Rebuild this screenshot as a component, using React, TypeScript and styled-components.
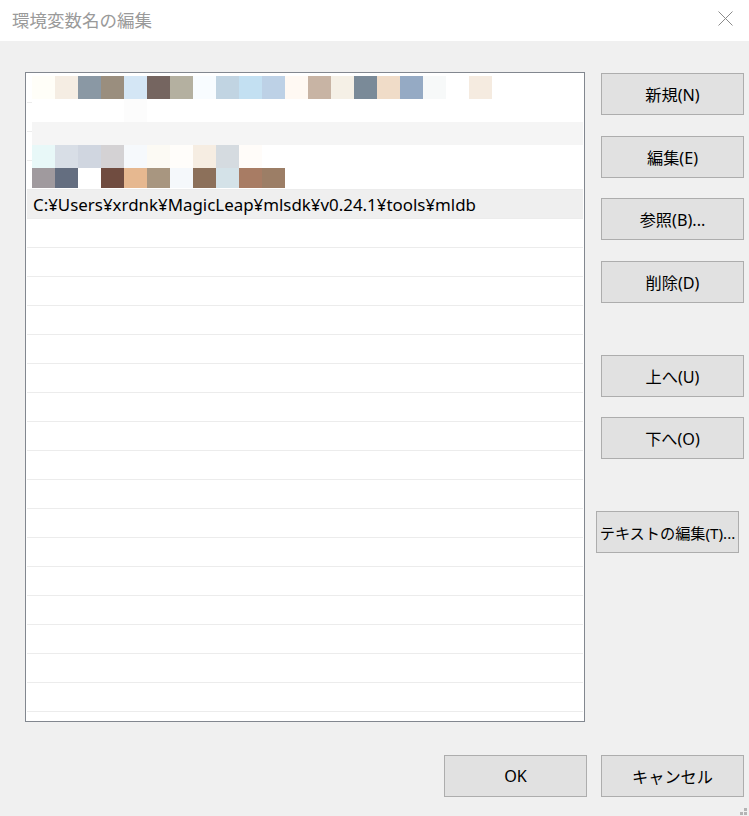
import React from "react"
import styled, {createGlobalStyle} from "styled-components"

const GlobalStyle = createGlobalStyle`
  html, body {
    margin: 0;
    padding: 0;
    background: #f0f0f0;
  }
  body {
    font-family: "Noto Sans", "Noto Sans CJK JP", sans-serif;
  }
`

const Window = styled.div`
  position: relative;
  width: 749px;
  height: 816px;
  background: #f0f0f0;
  display: flex;
  flex-direction: column;
  overflow: hidden;
`

const TitleBar = styled.div`
  height: 41px;
  flex: none;
  background: #ffffff;
  display: flex;
  align-items: center;
  justify-content: space-between;
  padding: 0 16px 0 12px;
`

const Title = styled.span`
  font-family: "Noto Sans CJK JP", sans-serif;
  font-size: 17.5px;
  color: #9a9a9a;
  line-height: 1;
  margin-top: -1px;
`

const CloseButton = styled.button`
  width: 15px;
  height: 15px;
  padding: 0;
  border: 0 none;
  background: transparent;
  display: block;
  margin-top: -4px;
`

const Body = styled.div`
  display: flex;
  padding: 31px 5px 0 25px;
`

const List = styled.div`
  position: relative;
  width: 560px;
  height: 650px;
  box-sizing: border-box;
  border: 1px solid #82878f;
  background: #ffffff;
  padding: 1px 1px 0 1px;
  overflow: hidden;
`

const Row = styled.div<{$selected?: boolean}>`
  height: 28px;
  border-bottom: 1px solid #ececec;
  background: ${p => (p.$selected ? "#efefef" : "#ffffff")};
  display: flex;
  align-items: center;
  padding-left: 6px;
  font-size: 16.9px;
  color: #000000;
  white-space: nowrap;
`

const Mosaic = styled.svg`
  position: absolute;
  left: 6px;
  top: 3px;
  display: block;
`

const ButtonColumn = styled.div`
  display: flex;
  flex-direction: column;
  margin-left: 16px;
  width: 143px;
`

const Button = styled.button<{$top?: number; $shift?: number; $compact?: boolean}>`
  width: 143px;
  height: 42px;
  flex: none;
  box-sizing: border-box;
  margin-top: ${p => p.$top ?? 0}px;
  margin-left: ${p => -(p.$shift ?? 0)}px;
  padding: 0;
  background: #e1e1e1;
  border: 1px solid #adadad;
  border-radius: 0;
  font-family: "Noto Sans", "Noto Sans CJK JP", sans-serif;
  font-size: ${p => (p.$compact ? 15.2 : 16.2)}px;
  color: #000000;
  white-space: nowrap;
  display: flex;
  align-items: center;
  justify-content: center;
`

const Footer = styled.div`
  display: flex;
  justify-content: flex-end;
  gap: 14px;
  padding: 33px 5px 0 0;
`

const Grip = styled.svg`
  position: absolute;
  right: 1px;
  bottom: 0;
  display: block;
`

type Cell = [number, string]

// pixelated entries at the top of the list
const mosaicRows: {y: number; h: number; cells: Cell[]}[] = [
  {
    y: 0, h: 23, cells: [
      [0, "#fffef8"], [23, "#f5ede3"], [46, "#8a98a4"], [69, "#9a8e7e"], [92, "#d4e6f5"],
      [115, "#756560"], [138, "#b4b0a0"], [161, "#f8fcff"], [184, "#c1d4e2"], [207, "#c3e0f2"],
      [230, "#bdd1e6"], [253, "#fff9f3"], [276, "#c8b4a4"], [299, "#f5f0e6"], [322, "#7a8a98"],
      [345, "#f0dcc8"], [368, "#95aac4"], [391, "#f7f9f9"], [437, "#f5ebe0"],
    ],
  },
  {y: 23, h: 23, cells: [[92, "#fcfcfc"]]},
  {
    y: 69, h: 23, cells: [
      [0, "#e8f8f8"], [23, "#d8dee6"], [46, "#d0d6e0"], [69, "#d4d2d4"], [92, "#f6f9fc"],
      [115, "#fcfaf4"], [138, "#fffdfa"], [161, "#f6ede2"], [184, "#d5dbe0"], [207, "#fffcf9"],
    ],
  },
  {
    y: 92, h: 20, cells: [
      [0, "#a09a9e"], [23, "#646e80"], [69, "#704c40"], [92, "#e6b890"], [115, "#a89680"],
      [138, "#f5f8fb"], [161, "#8c705a"], [184, "#d4e2e8"], [207, "#a87c64"], [230, "#9c7e66"],
    ],
  },
]

const ROW_COUNT = 23

export default function App() {
  let rows = []
  for (let i = 0; i < ROW_COUNT; i++) {
    if (i === 4) {
      rows.push(<Row key={i} $selected>C:¥Users¥xrdnk¥MagicLeap¥mlsdk¥v0.24.1¥tools¥mldb</Row>)
    } else {
      rows.push(<Row key={i} />)
    }
  }

  return (
    <Window>
      <GlobalStyle />
      <TitleBar>
        <Title>環境変数名の編集</Title>
        <CloseButton aria-label="閉じる">
          <svg width="15" height="15" viewBox="0 0 15 15">
            <path d="M0.5 0.5 L14.5 14.5 M14.5 0.5 L0.5 14.5" stroke="#8a8a8a" strokeWidth="1" fill="none" />
          </svg>
        </CloseButton>
      </TitleBar>
      <Body>
        <List>
          {rows}
          <Mosaic width="551" height="112" viewBox="0 0 551 112">
            <rect x="0" y="0" width="551" height="112" fill="#ffffff" />
            <rect x="0" y="46" width="551" height="23" fill="#f5f5f5" />
            {mosaicRows.map(r =>
              r.cells.map(([x, c]) => <rect key={r.y + "-" + x} x={x} y={r.y} width="23" height={r.h} fill={c} />)
            )}
          </Mosaic>
        </List>
        <ButtonColumn>
          <Button $top={1}>新規(N)</Button>
          <Button $top={21}>編集(E)</Button>
          <Button $top={20}>参照(B)...</Button>
          <Button $top={21}>削除(D)</Button>
          <Button $top={52}>上へ(U)</Button>
          <Button $top={20}>下へ(O)</Button>
          <Button $top={52} $shift={5} $compact>テキストの編集(T)...</Button>
        </ButtonColumn>
      </Body>
      <Footer>
        <Button>OK</Button>
        <Button>キャンセル</Button>
      </Footer>
      <Grip width="8" height="8" viewBox="0 0 8 8">
        <rect x="4" y="0" width="3" height="3" fill="#b4b4b4" />
        <rect x="0" y="4" width="3" height="3" fill="#b4b4b4" />
        <rect x="4" y="4" width="3" height="3" fill="#b4b4b4" />
      </Grip>
    </Window>
  )
}
